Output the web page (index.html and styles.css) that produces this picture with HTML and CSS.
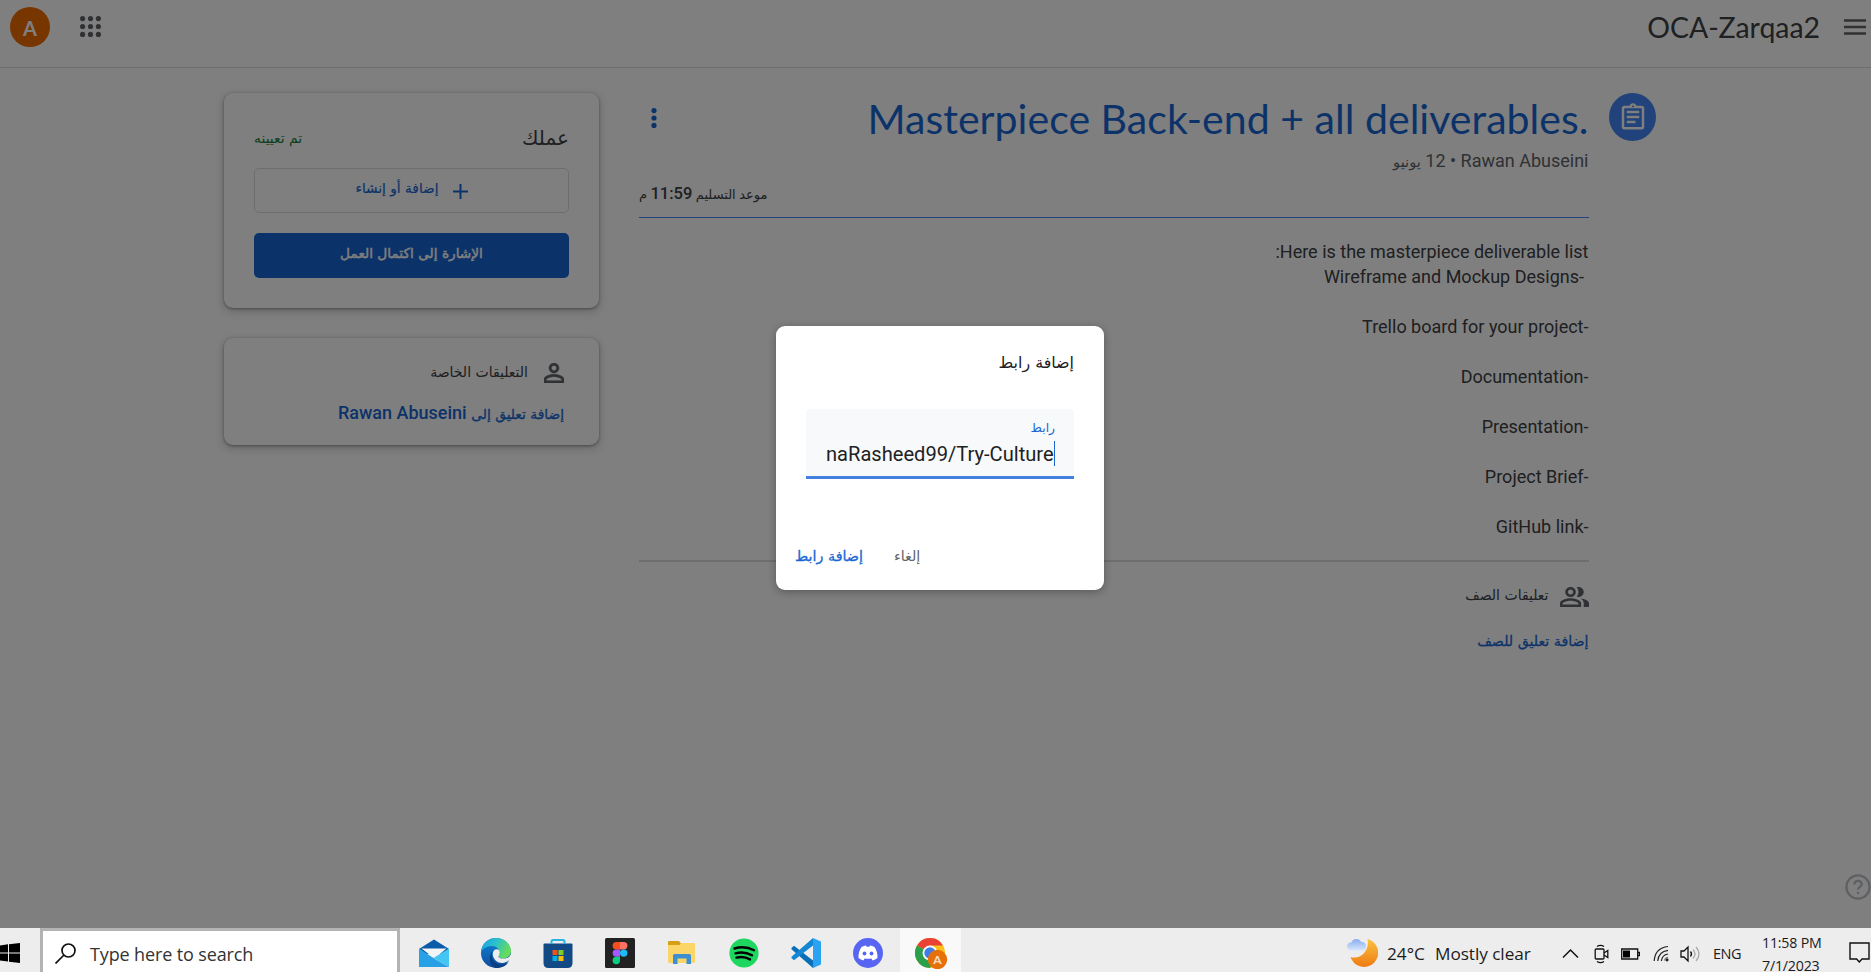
FILE: index.html
```html
<!DOCTYPE html>
<html lang="ar">
<head>
<meta charset="utf-8">
<title>OCA-Zarqaa2</title>
<link rel="stylesheet" href="styles.css">
</head>
<body>
<div class="screen">
  <div class="page" dir="rtl">
    <header class="topbar">
      <svg class="menu-icon" width="22" height="16" viewBox="0 0 22 16"><path d="M0 1.5h22M0 8h22M0 14.5h22" stroke="#5f6368" stroke-width="2.6"/></svg>
      <h1 class="course">OCA-Zarqaa2</h1>
      <svg class="apps-icon" width="21" height="21" viewBox="0 0 21 21" fill="#5f6368"><circle cx="2.6" cy="2.6" r="2.6"/><circle cx="10.5" cy="2.6" r="2.6"/><circle cx="18.4" cy="2.6" r="2.6"/><circle cx="2.6" cy="10.5" r="2.6"/><circle cx="10.5" cy="10.5" r="2.6"/><circle cx="18.4" cy="10.5" r="2.6"/><circle cx="2.6" cy="18.4" r="2.6"/><circle cx="10.5" cy="18.4" r="2.6"/><circle cx="18.4" cy="18.4" r="2.6"/></svg>
      <div class="avatar">A</div>
    </header>
    <main class="content">
      <div class="task-badge">
        <svg width="30" height="30" viewBox="0 0 24 24" fill="#fff"><path d="M7 15h7v2H7zm0-4h10v2H7zm0-4h10v2H7zm12-4h-4.18C14.4 1.84 13.3 1 12 1s-2.4.84-2.82 2H5c-1.1 0-2 .9-2 2v15c0 1.1.9 2 2 2h14c1.1 0 2-.9 2-2V5c0-1.1-.9-2-2-2zm-7-.25c.41 0 .75.34.75.75s-.34.75-.75.75-.75-.34-.75-.75.34-.75.75-.75zM19 20H5V5h14v15z"/></svg>
      </div>
      <section class="task">
        <div class="task-head">
          <h2 class="task-title" dir="ltr">Masterpiece Back-end + all deliverables.</h2>
          <svg class="dots" width="6" height="20" viewBox="0 0 6 20" fill="#1967d2"><circle cx="3" cy="2.6" r="2.6"/><circle cx="3" cy="10" r="2.6"/><circle cx="3" cy="17.4" r="2.6"/></svg>
        </div>
        <div class="meta"><bdi>Rawan Abuseini</bdi> • <bdi dir="rtl">12 <span class="ar15">يونيو</span></bdi></div>
        <div class="due"><span class="ar13">موعد التسليم</span> 11:59 <span class="ar13">م</span></div>
        <div class="body">Here is the masterpiece deliverable list:<br>&nbsp;-Wireframe and Mockup Designs<br><br>-Trello board for your project<br><br>-Documentation<br><br>-Presentation<br><br>-Project Brief<br><br>-GitHub link</div>
        <div class="comments-head">
          <svg width="29" height="20" viewBox="1 4 22 16" preserveAspectRatio="none" fill="#5f6368"><path d="M9 12c2.21 0 4-1.79 4-4s-1.79-4-4-4-4 1.79-4 4 1.79 4 4 4zm0-6c1.1 0 2 .9 2 2s-.9 2-2 2-2-.9-2-2 .9-2 2-2zm0 7c-2.67 0-8 1.34-8 4v3h16v-3c0-2.66-5.33-4-8-4zm6 5H3v-.99C3.2 16.29 6.3 15 9 15s5.8 1.29 6 2v1zM15 12c2.21 0 4-1.79 4-4s-1.79-4-4-4c-.47 0-.91.1-1.33.24C14.5 5.27 15 6.58 15 8s-.5 2.73-1.33 3.76c.42.14.86.24 1.33.24zM16.7 13.1C18.1 14.1 19 15.3 19 17v3h4v-3c0-2.2-3.4-3.5-6.300-3.900z"/></svg>
          <span>تعليقات الصف</span>
        </div>
        <div class="class-link">إضافة تعليق للصف</div>
      </section>
      <aside class="side">
        <div class="card work">
          <div class="work-head"><span class="work-title">عملك</span><span class="assigned">تم تعيينه</span></div>
          <div class="btn outline"><svg width="15" height="15" viewBox="0 0 15 15"><path d="M7.500 0v15M0 7.500h15" stroke="#1967d2" stroke-width="2"/></svg><span>إضافة أو إنشاء</span></div>
          <div class="btn solid"><span>الإشارة إلى اكتمال العمل</span></div>
        </div>
        <div class="card private">
          <div class="private-head">
            <svg width="20" height="20" viewBox="4 4 16 16" fill="#5f6368"><path d="M12 5.900c1.160 0 2.100.94 2.100 2.100s-.94 2.100-2.100 2.100S9.900 9.160 9.900 8s.94-2.100 2.100-2.100m0 9c2.970 0 6.100 1.460 6.100 2.100v1.100H5.900V17c0-.64 3.130-2.100 6.100-2.100M12 4C9.790 4 8 5.790 8 8s1.790 4 4 4 4-1.790 4-4-1.790-4-4-4zm0 9c-2.670 0-8 1.340-8 4v3h16v-3c0-2.660-5.330-4-8-4z" stroke="#5f6368" stroke-width=".4"/></svg>
            <span>التعليقات الخاصة</span>
          </div>
          <div class="private-link"><span class="ar14">إضافة تعليق إلى</span> Rawan Abuseini</div>
        </div>
      </aside>
    </main>
    <svg class="help" width="26" height="26" viewBox="0 0 26 26" fill="none" stroke="#bdc1c9" stroke-width="2.300"><circle cx="13" cy="13" r="11.600"/><path d="M9.300 10.500c0-4.700 7.400-4.700 7.400-.3 0 2.700-3.700 2.700-3.700 5.600M13 17.700v2.300"/></svg>
    <div class="scrim"></div>
    <div class="dialog">
      <div class="dialog-title">إضافة رابط</div>
      <div class="field">
        <div class="label">رابط</div>
        <div class="value" dir="ltr">naRasheed99/Try-Culture</div>
      </div>
      <div class="actions"><span class="cancel">إلغاء</span><span class="confirm">إضافة رابط</span></div>
    </div>
  </div>
  <footer class="taskbar">
    <div class="start"><svg width="20" height="20" viewBox="0 0 20 20"><path d="M0 2.500l8-1.200V9.400H0zM9 1.200L20 0v9.400H9zM0 10.400h8v8.200l-8-1.200zM9 10.400h11V20L9 18.700z"/></svg></div>
    <div class="search">
      <svg width="21" height="21" viewBox="0 0 21 21" fill="none" stroke="#111" stroke-width="1.700"><circle cx="13.500" cy="7.500" r="6.500"/><path d="M9 12l-8.500 8.500"/></svg>
      <span>Type here to search</span>
    </div>
    <div class="apps">
      <svg class="app" viewBox="0 0 30 30"><path d="M0 11L15 1.500 30 11l-3 5H3z" fill="#0a5ba8"/><path d="M2.500 10.500h25l-12 10z" fill="#f3f4f6"/><path d="M0 10.500l15 10L0 29z" fill="#2fa8e8"/><path d="M30 10.500V29L14.500 20z" fill="#45c6f2"/><path d="M0 29V12l30 17z" fill="#27a0e6"/></svg>
      <svg class="app" viewBox="0 0 30 30"><defs><linearGradient id="eg" x1="0" y1="0" x2="1" y2=".4"><stop offset="0" stop-color="#1b9ce0"/><stop offset=".5" stop-color="#2cc0cc"/><stop offset="1" stop-color="#66dc58"/></linearGradient><linearGradient id="eb" x1="0" y1="0" x2="0" y2="1"><stop offset="0" stop-color="#0e86d8"/><stop offset="1" stop-color="#114b9c"/></linearGradient></defs><circle cx="15" cy="15" r="15" fill="url(#eb)"/><path d="M.2 13C1 5.500 7 0 15 0c8.500 0 15 6 15 13 0 5-4 7.500-8 7.500-3 0-5-1-4.500-2.200 1.200-1.600 1.800-3.800.8-6C15 6 5.500 7 .2 13z" fill="url(#eg)"/><path d="M11.500 13c-2.500 6 1 13.500 8.500 13.700 3 .1 5.500-1 7.500-2.500C24.500 28.500 20 30 15 30 9 29 6.500 18.500 11.500 13z" fill="#0b3f83"/><path d="M17.500 18.300c1.200-1.600 1.800-3.800.8-6-3-2.800-7 0-6.500 4.500.6 5.200 5.500 8.700 10 8.200 3-.4 5.400-1.700 7-3.500h1.200v-5c-1.500 2.800-4.500 4-8 4-3 0-5-1-4.500-2.200z" fill="#ededed"/></svg>
      <svg class="app" viewBox="0 0 30 30"><path d="M.5 6.500q0-1 1-1h27q1 0 1 1V25q0 5-5 5h-19q-5 0-5-5z" fill="#124a86"/><path d="M8.500 6V3.500q0-1.500 1.500-1.500h10q1.500 0 1.500 1.500V6" fill="none" stroke="#27b5e0" stroke-width="2"/><path d="M9.500 12h5v5h-5z" fill="#f1511b"/><path d="M15.500 12h5v5h-5z" fill="#80cc28"/><path d="M9.500 18h5v5h-5z" fill="#00adef"/><path d="M15.500 18h5v5h-5z" fill="#fbbc09"/></svg>
      <svg class="app" viewBox="0 0 30 30"><rect width="30" height="30" rx="1.500" fill="#222"/><path d="M15 4h-3.700a3.700 3.700 0 000 7.400H15z" fill="#f24e1e"/><path d="M15 4h3.700a3.700 3.700 0 010 7.400H15z" fill="#ff7262"/><path d="M15 11.400h-3.700a3.700 3.700 0 000 7.400H15z" fill="#a259ff"/><circle cx="18.700" cy="15.100" r="3.700" fill="#1abcfe"/><path d="M15 18.800h-3.700a3.700 3.700 0 103.700 3.700z" fill="#0acf83"/></svg>
      <svg class="app" viewBox="0 0 30 30"><path d="M1 4q0-1 1-1h10l2 2.500V8H1z" fill="#d6a014"/><path d="M1 7h11.500l2-2H27q1 0 1 1v18q0 1-1 1H2q-1 0-1-1z" fill="#fbd567"/><path d="M6 26v-8.500Q6 16 7.500 16h15q1.500 0 1.500 1.500V26h-4.500v-5.500h-9V26z" fill="#3d8fd1"/></svg>
      <svg class="app" viewBox="0 0 30 30"><circle cx="15" cy="15" r="14.600" fill="#1ed760"/><path d="M5.500 10.500c6.500-1.900 14-1.200 19.500 1.800M6.500 15.300c5.500-1.500 11.500-.8 16.500 2M7.500 19.600c4.500-1.100 9.500-.6 13.500 1.800" fill="none" stroke="#000" stroke-width="2.400" stroke-linecap="round"/></svg>
      <svg class="app" viewBox="0 0 30 30"><path d="M1 9.500l2-1.700 19 14.700V30L.8 11.500q-1-1 .2-2z" fill="#0a6fb8"/><path d="M1 20.500l2 1.700L22 7.500V0L.8 18.500q-1 1 .2 2z" fill="#1487d4"/><path d="M22 0l8 3.500v23L22 30z" fill="#2ba3f0"/></svg>
      <svg class="app" viewBox="0 0 30 30"><circle cx="15" cy="15" r="15" fill="#5865f2"/><path d="M8.500 9c1.500-.8 3-1.300 4.500-1.500l.7 1.300h2.600l.7-1.300c1.600.2 3 .7 4.500 1.500 2.200 3.200 3.200 7 3 11-1.600 1.200-3.200 2-4.900 2.400l-1.200-2c-2.200.6-4.600.6-6.800 0l-1.200 2C8.700 22 7.100 21.200 5.500 20c-.2-4 .8-7.800 3-11z" fill="#fff"/><ellipse cx="11.500" cy="15.500" rx="1.900" ry="2.100" fill="#5865f2"/><ellipse cx="18.500" cy="15.500" rx="1.900" ry="2.100" fill="#5865f2"/></svg>
      <div class="tile"><svg class="app chrome" viewBox="0 0 33 31"><circle cx="15" cy="15" r="15" fill="#fbc116"/><path d="M15 15L2 7.500A15 15 0 0128 7.500H15z" fill="#ea4335"/><path d="M2 7.500A15 15 0 0015 30l6.500-11.200L15 15z" fill="#2c9f4c"/><circle cx="15" cy="15" r="7.500" fill="#fff"/><circle cx="15" cy="15" r="5.700" fill="#3f7ee8"/><circle cx="22.500" cy="21.500" r="9.700" fill="#e8700a"/><text x="22.500" y="26" text-anchor="middle" class="chrome-letter">A</text></svg></div>
    </div>
    <div class="tray">
      <svg class="moon" width="31" height="30" viewBox="0 0 31 30"><defs><linearGradient id="mg" x1="0" y1="0" x2="0" y2="1"><stop offset="0" stop-color="#fbc140"/><stop offset="1" stop-color="#ee7b12"/></linearGradient><linearGradient id="cg" x1="0" y1="0" x2="0" y2="1"><stop offset="0" stop-color="#86aef0"/><stop offset="1" stop-color="#d8e5fb"/></linearGradient></defs><path d="M20.500 2a14.200 14.200 0 11-17 18C14 23 23 13 20.500 2z" fill="url(#mg)"/><path d="M4 13.500a4 4 0 01.3-8 5.500 5.500 0 0110-.5 4.300 4.300 0 011.200 8.500z" fill="url(#cg)"/></svg>
      <span class="temp">24°C</span>
      <span class="sky">Mostly clear</span>
      <svg class="chev" width="17" height="11" viewBox="0 0 17 11" fill="none" stroke="#111" stroke-width="1.500"><path d="M1 9.500l7.500-7.500L16 9.500"/></svg>
      <svg class="cam" width="16" height="20" viewBox="0 0 16 20" fill="none" stroke="#111" stroke-width="1.300"><rect x="1.200" y="5" width="8.800" height="10" rx="1"/><path d="M10 9l3.800-2.500v7L10 11M3 2.500q3.500-2.200 7 0M3 17.500q3.500 2.200 7 0"/></svg>
      <svg class="bat" width="19" height="12" viewBox="0 0 19 12"><path d="M.7 1h16v10H.7zM17 4.500h1.500v3H17" fill="none" stroke="#111" stroke-width="1.300"/><path d="M2 2.500h7v7H2z"/></svg>
      <svg class="wifi" width="17" height="17" viewBox="0 0 17 17" fill="none" stroke="#222" stroke-width="1.200"><path d="M1.200 16Q2 3 15 1.500M4.800 16Q5.500 6.500 15 5.300M8.400 16q.6-6 6.600-7"/><circle cx="14" cy="14.800" r="1" fill="#111"/><path d="M11.600 15.500q.4-2.800 3.400-3.200" stroke="#777"/></svg>
      <svg class="vol" width="21" height="18" viewBox="0 0 21 18" fill="none" stroke="#111" stroke-width="1.300"><path d="M1 6h3l4-4v14l-4-4H1zM10.500 6.500q2 2.500 0 5"/><path d="M13 4.500q4 4.500 0 9M16 2q6 7 0 14" stroke="#aaa"/></svg>
      <span class="lang">ENG</span>
      <div class="clock"><div>11:58 PM</div><div>7/1/2023</div></div>
      <svg class="note" width="21" height="21" viewBox="0 0 21 21" fill="none" stroke="#111" stroke-width="1.400"><path d="M1 1h19v16h-7l-2.700 3L7.600 17H1z"/></svg>
    </div>
  </footer>
</div>
</body>
</html>
```
FILE: styles.css
```css
* { box-sizing: border-box; }
body { margin: 0; }
svg { display: block; flex: none; }
.screen {
  width: 1871px; height: 972px; overflow: hidden;
  display: flex; flex-direction: column;
  font-family: Roboto, "DejaVu Sans", sans-serif;
}
.page { position: relative; flex: none; height: 928px; background: #fff; color: #3c4043; overflow: hidden; }

.topbar { display: flex; align-items: center; height: 68px; padding: 0 5px 14px 10px; border-bottom: 1.500px solid #dadce0; }
.course { margin: 0 24px 0 auto; font: 400 28.400px/40px Lato, sans-serif; color: #3c4043; padding-top: 1px; }
.apps-icon { margin-left: 30px; }
.avatar { width: 40px; height: 40px; border-radius: 50%; background: #ef6c00; color: #fff; text-align: center; font: 700 20px/42px Lato, sans-serif; }

.content { display: flex; padding: 25px 215px 0 0; }
.task-badge { width: 47px; height: 48px; border-radius: 50%; background: #4285f4; display: flex; align-items: center; justify-content: center; margin-left: 20.500px; }
.task { width: 949.500px; }
.task-head { display: flex; justify-content: space-between; align-items: center; height: 46px; padding-left: 12px; }
.task-head .dots { margin-top: 3px; }
.task-title { margin: 3px 0 0; font: 400 41.100px/46px Lato, sans-serif; color: #1967d2; white-space: nowrap; }
.meta { margin-top: 10px; font-size: 18px; line-height: 24px; color: #5f6368; }
.ar15, .ar14, .ar13 { font-family: "DejaVu Sans", sans-serif; line-height: 1; }
.ar15 { font-size: 14.700px; }
.ar14 { font-size: 13.800px; }
.ar13 { font-size: 13px; font-weight: 400; }
.due { margin-top: 9px; padding-bottom: 11px; border-bottom: 1px solid #4285f4; font-size: 16.500px; font-weight: 500; line-height: 24px; text-align: left; color: #3c4043; word-spacing: -0.700px; letter-spacing: -0.200px; }
.due .ar13 { letter-spacing: 0; }
.body { margin-top: 20.500px; font-size: 18px; line-height: 25px; padding-bottom: 21px; border-bottom: 2px solid #dadce0; }
.comments-head { display: flex; align-items: center; gap: 11px; margin-top: 23px; height: 24px; font: 14px/20px "DejaVu Sans", sans-serif; }
.comments-head span { margin-top: -4px; }
.class-link { margin-top: 21px; font: 14.200px/22px "DejaVu Sans", sans-serif; color: #1967d2; -webkit-text-stroke: 0.300px #1967d2; }

.side { width: 375px; margin-right: 40px; display: flex; flex-direction: column; gap: 30px; }
.card { border-radius: 9px; background: #fff; box-shadow: 0 1px 3px rgba(60,64,67,.5), 0 3px 8px 2px rgba(60,64,67,.18); }
.work { height: 215px; padding: 30px; }
.work-head { display: flex; justify-content: space-between; height: 45px; font-family: "DejaVu Sans", sans-serif; }
.work-title { font-size: 20px; line-height: 30px; }
.assigned { font-size: 13.900px; line-height: 31px; color: #188038; }
.btn { height: 45px; border-radius: 5px; display: flex; align-items: center; justify-content: center; gap: 14px; font: 13.700px/20px "DejaVu Sans", sans-serif; color: #1967d2; }
.btn span { margin-top: -5px; }
.outline { border: 1.500px solid #dadce0; }
.outline svg { margin-top: 2px; }
.outline span { -webkit-text-stroke: 0.200px #1967d2; }
.solid { margin-top: 20px; background: #1967d2; color: #fff; -webkit-text-stroke: 0.400px #fff; }
.private { height: 107px; padding: 23px 35px 0; }
.private-head { display: flex; align-items: center; gap: 16px; height: 24px; font: 14px/20px "DejaVu Sans", sans-serif; }
.private-head span { margin-top: -3px; }
.private-link { margin-top: 16px; font: 500 18px/24px Roboto, sans-serif; color: #1967d2; white-space: nowrap; }
.private-link .ar14 { font-weight: 400; -webkit-text-stroke: 0.300px #1967d2; }

.help { position: absolute; left: 1845px; top: 874px; }
.scrim { position: absolute; inset: 0; background: rgba(0,0,0,.5); }

.dialog { position: absolute; left: 776px; top: 326px; width: 328px; height: 264px; border-radius: 9px; background: #fff; padding: 24px 30px 0; font-family: "DejaVu Sans", sans-serif; color: #202124; box-shadow: 0 2px 8px rgba(0,0,0,.3); }
.dialog-title { font-size: 15.900px; line-height: 25px; }
.field { margin-top: 34px; height: 70px; border-radius: 4px 4px 0 0; background: #f8f9fa; border-bottom: 3px solid #4480e0; padding: 11px 19px 0; }
.label { font-size: 12.300px; line-height: 17px; color: #1967d2; }
.value { width: 229px; margin-top: 4px; border-right: 1.500px solid #1967d2; height: 25px; overflow: hidden; font: 20.100px/26px Roboto, sans-serif; color: #202124; }
.actions { display: flex; justify-content: flex-end; gap: 31px; margin: 65px 0 0 -11px; font-size: 14.300px; line-height: 24px; }
.cancel { color: #5f6368; }
.confirm { color: #1967d2; -webkit-text-stroke: 0.300px #1967d2; }

.taskbar { flex: none; display: flex; height: 44px; background: #ededed; color: #1b1b1b; font-family: "Open Sans", sans-serif; overflow: hidden; white-space: nowrap; }
.start { width: 40px; padding-top: 15px; }
.search { width: 360px; border: 3px solid #b3b3b3; border-bottom: 0; background: #fff; display: flex; padding: 12px 0 0 12px; gap: 14px; font-size: 18px; line-height: 22px; letter-spacing: -0.130px; color: #333; }
.apps { display: flex; padding-left: 19px; gap: 32px; }
.app { width: 30px; height: 30px; margin-top: 10px; }
.tile { width: 61px; height: 44px; background: #f9f9f9; margin-left: -15px; padding-left: 15px; }
.chrome { width: 33px; height: 31px; }
.chrome-letter { font: 700 12px Lato, sans-serif; fill: #fbe0c8; }
.tray { display: flex; margin-left: auto; }
.moon { margin-top: 9px; }
.temp, .sky { font-size: 17.200px; line-height: 24px; margin-top: 14px; }
.temp { width: 48px; margin-left: 9px; }
.sky { width: 127px; letter-spacing: -0.050px; }
.chev { margin-top: 20px; width: 17px; }
.cam { margin: 16px 0 0 15px; }
.bat { margin: 20px 0 0 11px; }
.wifi { margin: 17px 0 0 13px; }
.vol { margin: 17px 0 0 10px; }
.lang { margin: 14px 0 0 12px; width: 49px; font-size: 14.500px; line-height: 24px; letter-spacing: -0.500px; }
.clock { width: 61px; font-size: 14.200px; line-height: 23px; letter-spacing: -0.200px; margin-top: 3px; }
.note { margin: 14px 1px 0 26px; }
```
